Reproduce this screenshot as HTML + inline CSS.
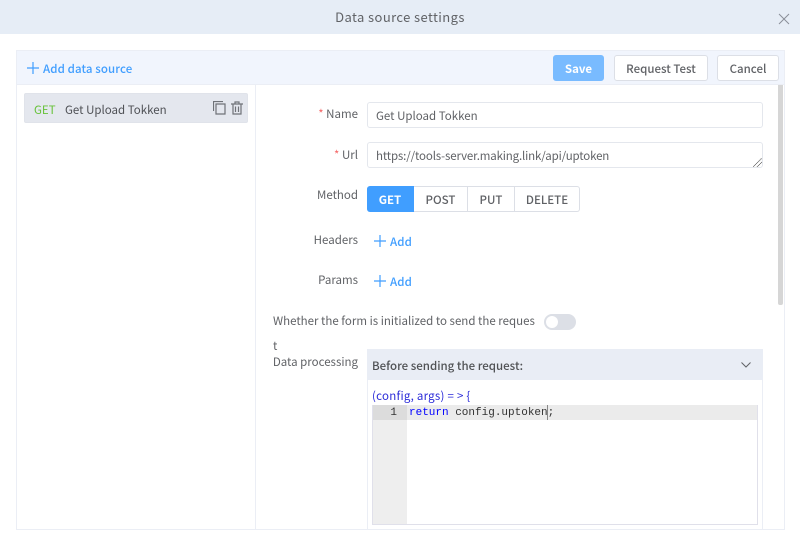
<!DOCTYPE html>
<html><head><meta charset="utf-8"><style>
html,body{margin:0;padding:0;background:#fff}
body{width:800px;height:545px;overflow:hidden;position:relative;font-family:"Noto Sans CJK SC","Liberation Sans",sans-serif;font-size:11.5px;color:#606266}
.a{position:absolute;box-sizing:border-box;white-space:nowrap}
.lab{text-align:right;right:442px;line-height:16px}
.inp{background:#fff;border:1px solid #e4e7ed;border-radius:3px;left:367px;width:396px;height:26px;line-height:26px;padding-left:8px}
.btn{background:#fff;border:1px solid #dcdfe6;border-radius:3px;top:55px;height:26px;line-height:26px;text-align:center;font-weight:500;color:#606266}
.blue{color:#409eff;font-weight:500;letter-spacing:.1px}
.seg{top:186px;height:26px;line-height:26px;text-align:center;border:1px solid #dcdfe6;border-left:0;font-weight:500;color:#606266}
i{color:#f56c6c;font-style:normal}
</style></head><body>
<div class="a" style="left:0;top:0;width:800px;height:34px;background:#e6edf6"></div>
<div class="a" style="left:0;width:800px;top:8px;text-align:center;font-size:13px;line-height:18px;letter-spacing:.4px;color:#606266">Data source settings</div>
<svg class="a" style="left:778px;top:13px" width="12" height="12" viewBox="0 0 12 12"><path d="M1 1L11 11M11 1L1 11" stroke="#8a8f99" stroke-width="1" fill="none"/></svg>

<div class="a" style="left:16px;top:50px;width:769px;height:480px;border:1px solid #ebeef5"></div>
<div class="a" style="left:17px;top:51px;width:767px;height:34px;background:#f1f5fd;border-bottom:1px solid #ebeef5"></div>
<div class="a" style="left:255px;top:85px;width:1px;height:444px;background:#ebeef5"></div>

<svg class="a" style="left:27px;top:62px" width="12" height="12" viewBox="0 0 12 12"><path d="M6 0V12M0 6H12" stroke="#409eff" stroke-width="1.2" fill="none"/></svg>
<div class="a blue" style="left:43px;top:61px;line-height:16px">Add data source</div>

<div class="a btn" style="left:553px;width:51px;background:#79bbff;border-color:#79bbff;color:#fff;font-weight:700">Save</div>
<div class="a btn" style="left:614px;width:94px">Request Test</div>
<div class="a btn" style="left:717px;width:62px">Cancel</div>

<div class="a" style="left:24px;top:93px;width:224px;height:30px;background:#e4e7ee;border:1px solid #e0e3ea;border-radius:2px"></div>
<div class="a" style="left:34px;top:102px;line-height:16px;color:#67c23a">GET</div>
<div class="a" style="left:65px;top:102px;line-height:16px;color:#4f5156">Get Upload Tokken</div>
<svg class="a" style="left:213px;top:101px" width="13" height="14" viewBox="0 0 13 14"><path d="M.5 10V.5H10M3 3H12V13H3Z" stroke="#6f7278" stroke-width="1.2" fill="none"/></svg>
<svg class="a" style="left:231px;top:101px" width="12" height="14" viewBox="0 0 12 14"><path d="M0 3H12M4 3V1H8V3M2 3.5V13H10V3.5M4.5 5.5V11M7.5 5.5V11" stroke="#6f7278" stroke-width="1.2" fill="none"/></svg>

<div class="a lab" style="top:106px"><i>*</i> Name</div>
<div class="a inp" style="top:102px">Get Upload Tokken</div>
<div class="a lab" style="top:147px"><i>*</i> Url</div>
<div class="a inp" style="top:142px;letter-spacing:-.15px">https://tools-server.making.link/api/uptoken</div>
<svg class="a" style="left:753px;top:158px" width="9" height="9" viewBox="0 0 9 9"><path d="M0 9L9 0M4 9L9 4" stroke="#666" stroke-width="1" stroke-dasharray="1 .5" fill="none"/></svg>

<div class="a lab" style="top:187px">Method</div>
<div class="a seg" style="left:367px;width:47px;background:#409eff;border-color:#409eff;color:#fff;border-radius:3px 0 0 3px;font-weight:700">GET</div>
<div class="a seg" style="left:414px;width:54px">POST</div>
<div class="a seg" style="left:468px;width:47px">PUT</div>
<div class="a seg" style="left:515px;width:65px;border-radius:0 3px 3px 0">DELETE</div>

<div class="a lab" style="top:232px">Headers</div>
<svg class="a" style="left:374px;top:235px" width="12" height="12" viewBox="0 0 12 12"><path d="M6 0V12M0 6H12" stroke="#409eff" stroke-width="1.2" fill="none"/></svg>
<div class="a blue" style="left:390px;top:234px;line-height:16px">Add</div>
<div class="a lab" style="top:272px">Params</div>
<svg class="a" style="left:374px;top:275px" width="12" height="12" viewBox="0 0 12 12"><path d="M6 0V12M0 6H12" stroke="#409eff" stroke-width="1.2" fill="none"/></svg>
<div class="a blue" style="left:390px;top:274px;line-height:16px">Add</div>

<div class="a" style="left:273px;top:313px;line-height:16px">Whether the form is initialized to send the reques</div>
<div class="a" style="left:544px;top:314px;width:32px;height:16px;border-radius:8px;background:#dcdfe6"></div>
<div class="a" style="left:546px;top:316px;width:12px;height:12px;border-radius:6px;background:#fff"></div>
<div class="a" style="left:273px;top:338px;line-height:16px">t</div>
<div class="a lab" style="top:354px">Data processing</div>

<div class="a" style="left:367px;top:349px;width:396px;height:181px;border-left:1px solid #ebeef5;border-right:1px solid #ebeef5"></div>
<div class="a" style="left:367px;top:349px;width:396px;height:31px;background:#e9edf5;line-height:34px;padding-left:5px;font-weight:500;color:#505255">Before sending the request:</div>
<svg class="a" style="left:741px;top:362px" width="10" height="6" viewBox="0 0 10 6"><path d="M.5 .5L5 5L9.5 .5" stroke="#606266" stroke-width="1" fill="none"/></svg>
<div class="a" style="left:372px;top:388px;line-height:16px;color:#2a2ad8;letter-spacing:.25px">(config, args) = &gt; {</div>
<div class="a" style="left:372px;top:405px;width:386px;height:120px;border:1px solid #e0e0ea;border-top:0;border-width:0 1px 1px 1px"></div>
<div class="a" style="left:373px;top:405px;width:34px;height:119px;background:#eee"></div>
<div class="a" style="left:373px;top:405px;width:384px;height:15px;background:#ebebeb"></div>
<div class="a" style="left:373px;top:405px;width:34px;height:15px;background:#dcdcdc"></div>
<div class="a" style="left:373px;top:406px;width:24px;text-align:right;font:11px/15px 'Liberation Mono',monospace;color:#333">1</div>
<div class="a" style="left:409px;top:406px;font:11px/15px 'Liberation Mono',monospace;color:#333"><span style="color:#00f">return</span> config.uptoken;</div>
<div class="a" style="left:547px;top:405px;width:1px;height:15px;background:#888"></div>

<div class="a" style="left:778px;top:85px;width:5px;height:220px;background:#d6d6d6;border-radius:0 0 2px 2px"></div>
</body></html>
